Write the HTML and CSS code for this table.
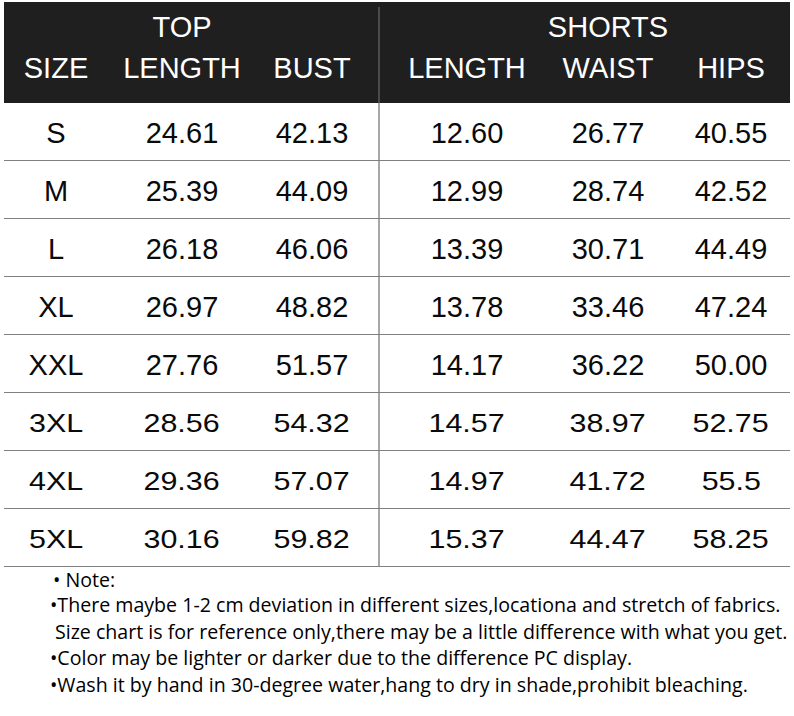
FILE: index.html
```html
<!DOCTYPE html>
<html>
<head>
<meta charset="utf-8">
<link rel="stylesheet" href="styles.css">
</head>
<body>
<div class="chart">
  <div class="head">
    <div class="hc c1"><span class="sup">&nbsp;</span><span>SIZE</span></div>
    <div class="hc c2"><span class="sup">TOP</span><span>LENGTH</span></div>
    <div class="hc c3"><span class="sup">&nbsp;</span><span>BUST</span></div>
    <div class="hc c4"><span class="sup">&nbsp;</span><span>LENGTH</span></div>
    <div class="hc c5"><span class="sup">SHORTS</span><span>WAIST</span></div>
    <div class="hc c6"><span class="sup">&nbsp;</span><span>HIPS</span></div>
  </div>
  <div class="row"><div class="c c1">S</div><div class="c c2">24.61</div><div class="c c3">42.13</div><div class="c c4">12.60</div><div class="c c5">26.77</div><div class="c c6">40.55</div></div>
  <div class="row"><div class="c c1">M</div><div class="c c2">25.39</div><div class="c c3">44.09</div><div class="c c4">12.99</div><div class="c c5">28.74</div><div class="c c6">42.52</div></div>
  <div class="row"><div class="c c1">L</div><div class="c c2">26.18</div><div class="c c3">46.06</div><div class="c c4">13.39</div><div class="c c5">30.71</div><div class="c c6">44.49</div></div>
  <div class="row"><div class="c c1">XL</div><div class="c c2">26.97</div><div class="c c3">48.82</div><div class="c c4">13.78</div><div class="c c5">33.46</div><div class="c c6">47.24</div></div>
  <div class="row"><div class="c c1">XXL</div><div class="c c2">27.76</div><div class="c c3">51.57</div><div class="c c4">14.17</div><div class="c c5">36.22</div><div class="c c6">50.00</div></div>
  <div class="row wide"><div class="c c1"><span>3XL</span></div><div class="c c2"><span>28.56</span></div><div class="c c3"><span>54.32</span></div><div class="c c4"><span>14.57</span></div><div class="c c5"><span>38.97</span></div><div class="c c6"><span>52.75</span></div></div>
  <div class="row wide"><div class="c c1"><span>4XL</span></div><div class="c c2"><span>29.36</span></div><div class="c c3"><span>57.07</span></div><div class="c c4"><span>14.97</span></div><div class="c c5"><span>41.72</span></div><div class="c c6"><span>55.5</span></div></div>
  <div class="row wide"><div class="c c1"><span>5XL</span></div><div class="c c2"><span>30.16</span></div><div class="c c3"><span>59.82</span></div><div class="c c4"><span>15.37</span></div><div class="c c5"><span>44.47</span></div><div class="c c6"><span>58.25</span></div></div>
</div>
<div class="notes">
  <p class="first">&bull; Note:</p>
  <p>&bull;There maybe 1-2 cm deviation in different sizes,locationa and stretch of fabrics.</p>
  <p class="indent">Size chart is for reference only,there may be a little difference with what you get.</p>
  <p>&bull;Color may be lighter or darker due to the difference PC display.</p>
  <p>&bull;Wash it by hand in 30-degree water,hang to dry in shade,prohibit bleaching.</p>
</div>
</body>
</html>
```

FILE: styles.css
```css
html, body {
  margin: 0;
  padding: 0;
  background: #ffffff;
}

body {
  padding: 2px 0 0 4px;
  font-family: "Liberation Sans", Arial, sans-serif;
}

.chart {
  width: 786px;
}

.head,
.row {
  display: grid;
  grid-template-columns: 104px 148px 124px 174px 108px 128px;
}

.head {
  background: #1f1f1f;
  color: #ffffff;
  height: 101px;
  box-sizing: border-box;
  padding-top: 5px;
}

.hc {
  display: flex;
  flex-direction: column;
  align-items: center;
  font-size: 29px;
  line-height: 41px;
}

.row {
  height: 58px;
  box-sizing: border-box;
  border-bottom: 1px solid #808080;
  color: #0a0a0a;
}

.c {
  display: flex;
  align-items: center;
  justify-content: center;
  font-size: 29px;
  padding-top: 3px;
}

.c3 {
  padding-right: 10px;
  border-right: 2px solid #a8a8a8;
}

.head .c3 {
  border-right-color: #4a4a4a;
}

.c6 {
  padding-left: 10px;
}

.wide .c {
  font-size: 26px;
}

.wide .c span {
  display: inline-block;
  transform: scaleX(1.17);
}

.notes {
  padding: 0 0 0 46px;
  font-family: "Open Sans", "Noto Sans", sans-serif;
  font-size: 19.6px;
  color: #000;
}

.notes p {
  margin: 0;
  line-height: 26.5px;
}

.notes .first {
  padding-left: 3px;
  line-height: 25px;
}

.notes .indent {
  padding-left: 5px;
}
```
